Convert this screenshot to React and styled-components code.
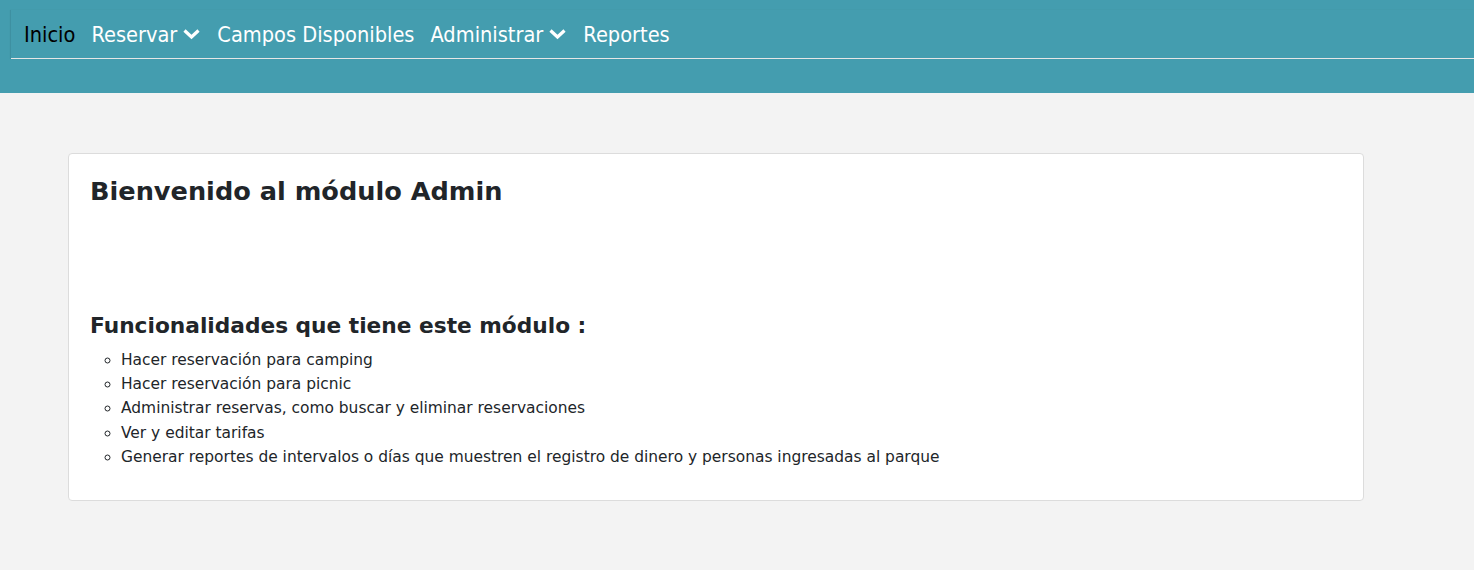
import styled, { createGlobalStyle } from "styled-components";

const GlobalStyle = createGlobalStyle`
  body {
    margin: 0;
    background: #f3f3f3;
    font-family: "DejaVu Sans", sans-serif;
    color: #212529;
  }
`;

const Header = styled.header`
  background: #449daf;
  height: 93px;
  padding: 10px 0 0 11px;
  box-sizing: border-box;
`;

const NavBar = styled.nav`
  display: flex;
  align-items: center;
  gap: 16px;
  height: 48px;
  padding-left: 13px;
  border-bottom: 1px solid #e6e6e6;
  box-shadow: -1px 0 1px rgba(0, 0, 0, 0.08);
`;

const NavItem = styled.a`
  display: flex;
  align-items: center;
  gap: 5px;
  font-family: "DejaVu Sans Condensed", "DejaVu Sans", sans-serif;
  font-size: 21.6px;
  color: ${(p) => (p.$active ? "#000" : "#fff")};
  text-decoration: none;
  cursor: pointer;
`;

const Main = styled.main`
  padding: 60px 110px 0 68px;
`;

const Card = styled.section`
  background: #fff;
  border: 1px solid #dcdcdc;
  border-radius: 4px;
  padding: 21px 20px 31px 21px;
  max-width: 1253px;
`;

const Title = styled.h1`
  margin: 0;
  font-size: 25.6px;
  font-weight: bold;
  line-height: 32px;
`;

const Subtitle = styled.h2`
  margin: 105px 0 8px;
  font-size: 21.7px;
  font-weight: bold;
  line-height: 28px;
`;

const List = styled.ul`
  margin: 0;
  padding-left: 31px;
  list-style: circle;

  li {
    font-size: 15.45px;
    line-height: 24.2px;
  }
`;

function Chevron() {
  return (
    <svg width="19" height="12" viewBox="0 0 19 12">
      <path
        d="M2.5 2.5 L9.5 9 L16.5 2.5"
        fill="none"
        stroke="#fff"
        strokeWidth="3.2"
      />
    </svg>
  );
}

const items = [
  "Hacer reservación para camping",
  "Hacer reservación para picnic",
  "Administrar reservas, como buscar y eliminar reservaciones",
  "Ver y editar tarifas",
  "Generar reportes de intervalos o días que muestren el registro de dinero y personas ingresadas al parque",
];

export default function App() {
  return (
    <>
      <GlobalStyle />
      <Header>
        <NavBar>
          <NavItem $active>Inicio</NavItem>
          <NavItem>
            Reservar <Chevron />
          </NavItem>
          <NavItem>Campos Disponibles</NavItem>
          <NavItem>
            Administrar <Chevron />
          </NavItem>
          <NavItem>Reportes</NavItem>
        </NavBar>
      </Header>
      <Main>
        <Card>
          <Title>Bienvenido al módulo Admin</Title>
          <Subtitle>Funcionalidades que tiene este módulo :</Subtitle>
          <List>
            {items.map((t) => (
              <li key={t}>{t}</li>
            ))}
          </List>
        </Card>
      </Main>
    </>
  );
}
